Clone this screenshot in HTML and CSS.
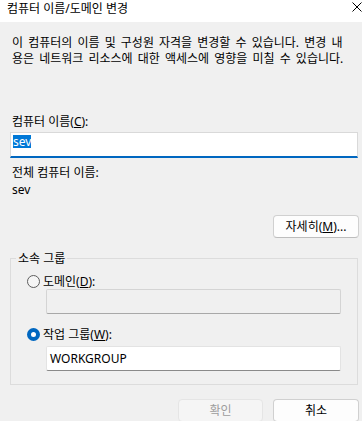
FILE: index.html
```html
<!doctype html>
<html lang="ko">
<head>
<meta charset="utf-8">
<title>컴퓨터 이름/도메인 변경</title>
<link rel="stylesheet" href="styles.css">
</head>
<body>

<div class="dialog">
  <!-- title bar -->
  <div class="titlebar">
    <span class="title">컴퓨터 이름/도메인 변경</span>
    <svg class="close" width="10" height="10" viewBox="0 0 10 10">
      <path d="M0.5 0.5 L9.5 9.5 M9.5 0.5 L0.5 9.5" stroke="#000" stroke-width="1" fill="none"/>
    </svg>
  </div>

  <div class="content">
    <p class="intro">
      <span>이 컴퓨터의 이름 및 구성원 자격을 변경할 수 있습니다. 변경 내</span>
      <span>용은 네트워크 리소스에 대한 액세스에 영향을 미칠 수 있습니다.</span>
    </p>

    <div class="label name-label">컴퓨터 이름(<u>C</u>):</div>
    <div class="field field-active"><span class="sel">sev</span></div>

    <div class="label full-label">전체 컴퓨터 이름:</div>
    <div class="label value">sev</div>

    <div class="btn-row more-row">
      <button class="btn">자세히(<u>M</u>)...</button>
    </div>

    <!-- member of -->
    <fieldset class="group">
      <legend>소속 그룹</legend>
      <div class="radio-row first">
        <span class="radio"></span>
        <span>도메인(<u>D</u>):</span>
      </div>
      <div class="field field-disabled"></div>
      <div class="radio-row second">
        <span class="radio checked"></span>
        <span>작업 그룹(<u>W</u>):</span>
      </div>
      <div class="field field-wg">WORKGROUP</div>
    </fieldset>

    <div class="btn-row footer-row">
      <button class="btn btn-ok" disabled>확인</button>
      <button class="btn btn-cancel">취소</button>
    </div>
  </div>
</div>

</body>
</html>
```

FILE: styles.css
```css
:root{
  --bg:     #f0f0f0;   /* dialog face */
  --txt:    #000;
  --line:   #dcdcdc;   /* box borders */
  --accent: #0067c0;   /* focus / radio */
  --select: #0078d7;   /* text selection */
}

* {
  box-sizing: border-box;
  margin: 0;
  padding: 0;
}
body {
  font-family: 'Noto Sans', 'Noto Sans CJK KR', sans-serif;
  font-size: 12px;
  line-height: 15px;
  color: var(--txt);
  background: var(--bg);
}
u {
  text-decoration-thickness: 1px;
  text-underline-offset: 1px;
}

/* ── title bar ─────────────────────────────────────────────── */
.titlebar {
  height: 22px;
  background: #fff;
  display: flex;
  justify-content: space-between;
  align-items: flex-start;
  padding-left: 7px;
}
.title {
  padding-top: 1px;
}
.close {
  margin-top: 2px;
  display: block;
}

/* ── content ──────────────────────────────────────────────── */
.content {
  padding: 0 4px 0 10px;
}
.intro {
  margin-top: 13px;
  padding-left: 2px;
  line-height: 16px;
  word-spacing: 2px;
}
.intro span {
  display: block;
  white-space: nowrap;
}
.label {
  padding-left: 2px;
}
.name-label {
  margin-top: 47px;
}
.full-label {
  margin-top: 7px;
}
.value {
  margin-top: 2px;
}

/* ── text boxes ───────────────────────────────────────────── */
.field {
  height: 25px;
  background: #fff;
  border: 1px solid #e3e3e3;
  border-bottom-color: #8a8a8a;
  border-radius: 2px;
  padding-left: 3px;
  line-height: 23px;
}
.field-active {
  margin-top: 3px;
  height: 26px;
  border-color: #d9d9d9;
  border-bottom: 2px solid var(--accent);
  border-radius: 0;
  padding: 2px 0 0 2px;
  line-height: 13px;
}
.sel {
  display: inline-block;
  background: var(--select);
  color: #fff;
  line-height: 13px;
}
.field-disabled {
  background: transparent;
  border-color: #d4d4d4;
  border-bottom-color: #a8a8a8;
  margin: 0 16px 0 35px;
}
.field-wg {
  margin: 4px 16px 0 35px;
}

/* ── buttons ──────────────────────────────────────────────── */
.btn-row {
  display: flex;
  justify-content: flex-end;
  gap: 10px;
}
.btn {
  font: inherit;
  color: var(--txt);
  width: 86px;
  height: 23px;
  background: #fdfdfd;
  border: 1px solid #d0d0d0;
  border-bottom-color: #bdbdbd;
  border-radius: 4px;
}
.more-row {
  margin-top: 18px;
  margin-right: -1px;
}
.footer-row {
  margin-top: 14px;
  margin-right: -1px;
}
.btn-ok {
  width: 85px;
  color: #9d9d9d;
  background: #f5f5f5;
  border-color: #e5e5e5;
}

/* ── group box ────────────────────────────────────────────── */
.group {
  margin-top: 13px;
  padding: 0 0 13px 0;
  border: 1px solid var(--line);
  min-width: 0;
}
.group legend {
  margin-left: 5px;
  padding: 0 2px;
  line-height: 15px;
}
.radio-row {
  display: flex;
  align-items: center;
  gap: 3px;
  height: 15px;
  margin-left: 16px;
}
.radio-row.first {
  margin-top: 8px;
}
.radio-row.second {
  margin-top: 13px;
}
.radio {
  width: 13px;
  height: 13px;
  border-radius: 50%;
  border: 1px solid #5d5d5d;
  background: #f5f5f5;
}
.radio.checked {
  border: 4px solid var(--accent);
  background: #fff;
}
```
